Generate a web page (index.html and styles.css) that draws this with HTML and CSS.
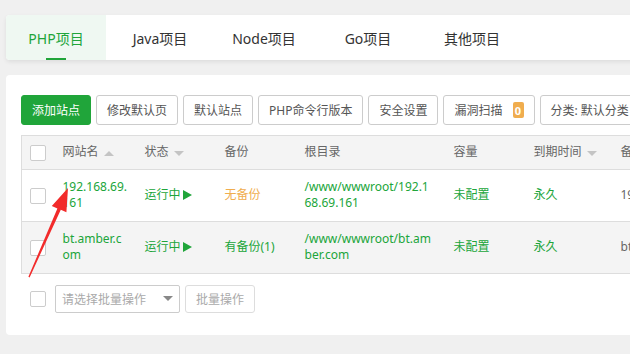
FILE: index.html
```html
<!DOCTYPE html>
<html lang="zh-CN">
<head>
<meta charset="utf-8">
<title>网站</title>
<link rel="stylesheet" href="styles.css">
</head>
<body>
<div class="page">
  <nav class="tabs">
    <a class="tab active">PHP项目</a>
    <a class="tab">Java项目</a>
    <a class="tab">Node项目</a>
    <a class="tab">Go项目</a>
    <a class="tab">其他项目</a>
  </nav>
  <section class="card">
    <div class="toolbar">
      <button class="btn btn-primary">添加站点</button>
      <button class="btn">修改默认页</button>
      <button class="btn">默认站点</button>
      <button class="btn">PHP命令行版本</button>
      <button class="btn">安全设置</button>
      <button class="btn">漏洞扫描<span class="badge">0</span></button>
      <button class="btn">分类: 默认分类<span class="caret-down"></span></button>
    </div>
    <table class="sites">
      <colgroup>
        <col class="c-chk"><col class="c-name"><col class="c-status"><col class="c-backup"><col class="c-path"><col class="c-size"><col class="c-exp"><col class="c-note">
      </colgroup>
      <thead>
        <tr>
          <th><span class="chk"></span></th>
          <th>网站名<span class="sort-up"></span></th>
          <th>状态<span class="sort-down"></span></th>
          <th>备份</th>
          <th>根目录</th>
          <th>容量</th>
          <th>到期时间<span class="sort-down"></span></th>
          <th>备注</th>
        </tr>
      </thead>
      <tbody>
        <tr>
          <td><span class="chk"></span></td>
          <td class="green">192.168.69.161</td>
          <td class="green">运行中<span class="play"></span></td>
          <td class="orange">无备份</td>
          <td class="green path">/www/wwwroot/192.168.69.161</td>
          <td class="green">未配置</td>
          <td class="green">永久</td>
          <td class="note">192.168.69.161</td>
        </tr>
        <tr class="hover">
          <td><span class="chk"></span></td>
          <td class="green">bt.amber.com</td>
          <td class="green">运行中<span class="play"></span></td>
          <td class="green">有备份(1)</td>
          <td class="green path">/www/wwwroot/bt.amber.com</td>
          <td class="green">未配置</td>
          <td class="green">永久</td>
          <td class="note">bt.amber.com</td>
        </tr>
      </tbody>
    </table>
    <div class="footer">
      <span class="chk"></span>
      <div class="select"><span>请选择批量操作</span><span class="select-caret"></span></div>
      <button class="btn btn-muted">批量操作</button>
    </div>
  </section>
  <svg class="annot-arrow" width="630" height="354" viewBox="0 0 630 354">
    <polygon points="68,188 66.4,212.3 60.8,209.8 29.6,277.4 28.4,276.8 57.4,208.4 51.8,205.9" fill="#f22b2b"/>
  </svg>
</div>
</body>
</html>
```

FILE: styles.css
```css
html, body {
  margin: 0;
  padding: 0;
}
body {
  background: #f0f0f0;
  font-family: "Noto Sans", "Noto Sans CJK SC", sans-serif;
  width: 630px;
  height: 354px;
  overflow: hidden;
}
.page {
  position: relative;
  width: 900px;
  padding: 15px 0 0 6px;
}

/* tabs */
.tabs {
  display: flex;
  gap: 4px;
  height: 45px;
  background: #fff;
  border-radius: 4px;
  box-shadow: 0 2px 4px rgba(0, 0, 0, 0.08);
}
.tab {
  position: relative;
  width: 100px;
  display: flex;
  align-items: center;
  justify-content: center;
  font-size: 14px;
  color: #333;
}
.tab.active {
  background: #eff8f2;
  color: #20a53a;
  border-radius: 4px 0 0 4px;
}
.tab.active::after {
  content: "";
  position: absolute;
  left: 40px;
  bottom: 0;
  width: 20px;
  height: 2px;
  background: #20a53a;
}

/* card */
.card {
  margin-top: 15px;
  background: #fff;
  border-radius: 4px;
  padding: 20px 15px 22px;
}
.toolbar {
  display: flex;
  gap: 5px;
}
.btn {
  height: 30px;
  padding: 0 10px;
  border: 1px solid #ccc;
  border-radius: 3px;
  background: #fff;
  color: #555;
  font-family: inherit;
  font-size: 12px;
  display: inline-flex;
  align-items: center;
  white-space: nowrap;
}
.btn-primary {
  background: #20a53a;
  border-color: #20a53a;
  color: #fff;
}
.badge {
  display: inline-flex;
  align-items: center;
  justify-content: center;
  margin-left: 10px;
  width: 11px;
  height: 16px;
  border-radius: 2px;
  background: #f0ad4e;
  color: #fff;
  font-size: 11px;
  font-weight: bold;
}
.caret-down {
  margin-left: 8px;
  border-left: 4px solid transparent;
  border-right: 4px solid transparent;
  border-top: 5px solid #555;
}

/* table */
.sites {
  margin-top: 10px;
  width: 860px;
  table-layout: fixed;
  border-collapse: collapse;
  border: 1px solid #ddd;
  font-size: 12px;
}
.c-chk { width: 33px; }
.c-name { width: 82px; }
.c-status { width: 80px; }
.c-backup { width: 80px; }
.c-path { width: 149px; }
.c-size { width: 80px; }
.c-exp { width: 87px; }
.sites th {
  background: #f4f4f4;
  color: #666;
  font-weight: normal;
  text-align: left;
  padding: 8px;
  line-height: 16px;
  border-bottom: 1px solid #ddd;
  white-space: nowrap;
}
.sites td {
  padding: 9px 8px;
  line-height: 16.5px;
  border-bottom: 1px solid #ddd;
  vertical-align: middle;
  word-break: break-all;
}
.sites td.path {
  padding-right: 10px;
}
.sites th:first-child,
.sites td:first-child {
  padding-right: 0;
}
.sites tr.hover td {
  background: #f4f4f4;
}
.green { color: #20a53a; }
.orange { color: #f0ad4e; }
.note { color: #666; white-space: nowrap; }

.chk {
  display: inline-block;
  width: 14px;
  height: 14px;
  border: 1px solid #ccc;
  border-radius: 2px;
  background: #fff;
  vertical-align: middle;
}
.sort-up,
.sort-down {
  display: inline-block;
  margin-left: 5px;
  vertical-align: middle;
  border-left: 5px solid transparent;
  border-right: 5px solid transparent;
}
.sort-up {
  border-bottom: 5px solid #c4c4c4;
}
.sort-down {
  border-top: 5px solid #c4c4c4;
}
.play {
  display: inline-block;
  margin-left: 2px;
  vertical-align: -1px;
  border-top: 5px solid transparent;
  border-bottom: 5px solid transparent;
  border-left: 9px solid #20a53a;
}

/* footer */
.footer {
  margin-top: 11px;
  display: flex;
  align-items: center;
  padding-left: 9px;
}
.select {
  box-sizing: border-box;
  margin-left: 9px;
  width: 125px;
  height: 28px;
  padding: 0 6px;
  border: 1px solid #ccc;
  border-radius: 2px;
  display: flex;
  align-items: center;
  justify-content: space-between;
  font-size: 12px;
  color: #aaa;
}
.select-caret {
  border-left: 5px solid transparent;
  border-right: 5px solid transparent;
  border-top: 5px solid #888;
}
.btn-muted {
  height: 28px;
  margin-left: 5px;
  border-color: #ddd;
  color: #aaa;
}

.annot-arrow {
  position: absolute;
  left: 0;
  top: 0;
  pointer-events: none;
}
```
